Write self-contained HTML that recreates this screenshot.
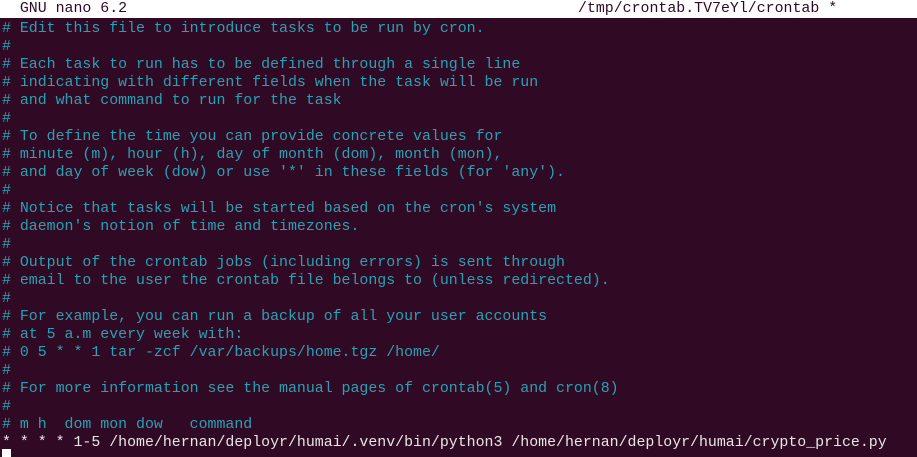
<!DOCTYPE html>
<html><head><meta charset="utf-8"><style>
html,body{margin:0;padding:0;background:#300a24;width:917px;height:457px;overflow:hidden}
pre{margin:0;font-family:"Liberation Mono","DejaVu Sans Mono",monospace;font-size:14.9px;line-height:18px;white-space:pre}
.hdr{position:absolute;left:0;top:0;width:917px;height:18px;background:#fff;color:#300a24}
.hdr pre{padding-left:2px;line-height:18px;position:relative}
.t{position:absolute;left:578px;top:0}
.body{position:absolute;left:2px;top:20px;color:#2aa1b3}
.w{color:#e6e6e6}
.cur{position:absolute;left:2px;top:449px;width:9px;height:8px;background:#fff}
</style></head><body>
<div class="hdr"><pre>  GNU nano 6.2<span class="t">/tmp/crontab.TV7eYl/crontab *</span></pre></div>
<pre class="body"># Edit this file to introduce tasks to be run by cron.
#
# Each task to run has to be defined through a single line
# indicating with different fields when the task will be run
# and what command to run for the task
#
# To define the time you can provide concrete values for
# minute (m), hour (h), day of month (dom), month (mon),
# and day of week (dow) or use '*' in these fields (for 'any').
#
# Notice that tasks will be started based on the cron's system
# daemon's notion of time and timezones.
#
# Output of the crontab jobs (including errors) is sent through
# email to the user the crontab file belongs to (unless redirected).
#
# For example, you can run a backup of all your user accounts
# at 5 a.m every week with:
# 0 5 * * 1 tar -zcf /var/backups/home.tgz /home/
#
# For more information see the manual pages of crontab(5) and cron(8)
#
# m h  dom mon dow   command
<span class="w">* * * * 1-5 /home/hernan/deployr/humai/.venv/bin/python3 /home/hernan/deployr/humai/crypto_price.py</span></pre>
<div class="cur"></div>
</body></html>
